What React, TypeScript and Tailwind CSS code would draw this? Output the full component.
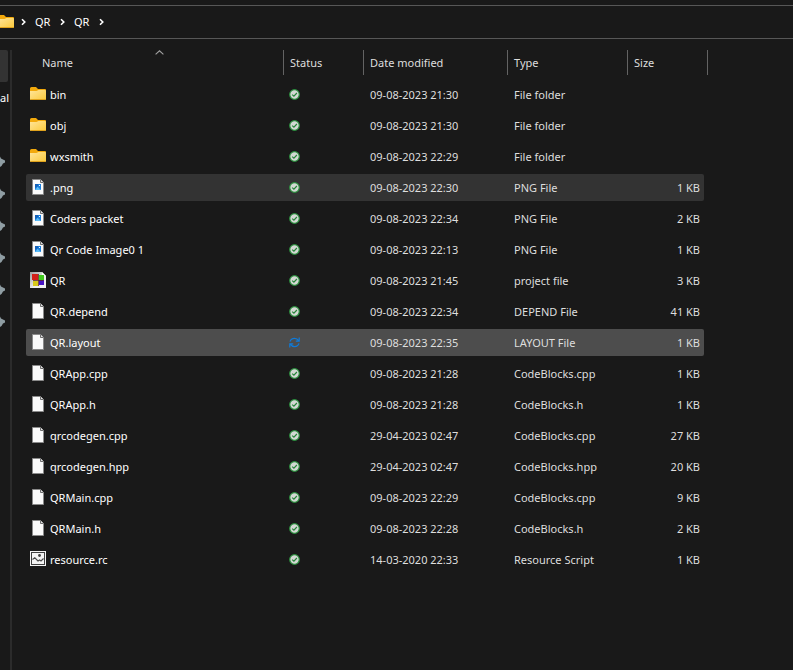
import React from 'react';

type IconKind = 'folder' | 'image' | 'project' | 'file' | 'resource';

interface Entry {
  name: string;
  icon: IconKind;
  date: string;
  type: string;
  size?: string;
  syncing?: boolean;
  state?: 'selected' | 'hover';
}

const entries: Entry[] = [
  { name: 'bin', icon: 'folder', date: '09-08-2023 21:30', type: 'File folder' },
  { name: 'obj', icon: 'folder', date: '09-08-2023 21:30', type: 'File folder' },
  { name: 'wxsmith', icon: 'folder', date: '09-08-2023 22:29', type: 'File folder' },
  { name: '.png', icon: 'image', date: '09-08-2023 22:30', type: 'PNG File', size: '1 KB', state: 'selected' },
  { name: 'Coders packet', icon: 'image', date: '09-08-2023 22:34', type: 'PNG File', size: '2 KB' },
  { name: 'Qr Code Image0 1', icon: 'image', date: '09-08-2023 22:13', type: 'PNG File', size: '1 KB' },
  { name: 'QR', icon: 'project', date: '09-08-2023 21:45', type: 'project file', size: '3 KB' },
  { name: 'QR.depend', icon: 'file', date: '09-08-2023 22:34', type: 'DEPEND File', size: '41 KB' },
  { name: 'QR.layout', icon: 'file', date: '09-08-2023 22:35', type: 'LAYOUT File', size: '1 KB', syncing: true, state: 'hover' },
  { name: 'QRApp.cpp', icon: 'file', date: '09-08-2023 21:28', type: 'CodeBlocks.cpp', size: '1 KB' },
  { name: 'QRApp.h', icon: 'file', date: '09-08-2023 21:28', type: 'CodeBlocks.h', size: '1 KB' },
  { name: 'qrcodegen.cpp', icon: 'file', date: '29-04-2023 02:47', type: 'CodeBlocks.cpp', size: '27 KB' },
  { name: 'qrcodegen.hpp', icon: 'file', date: '29-04-2023 02:47', type: 'CodeBlocks.hpp', size: '20 KB' },
  { name: 'QRMain.cpp', icon: 'file', date: '09-08-2023 22:29', type: 'CodeBlocks.cpp', size: '9 KB' },
  { name: 'QRMain.h', icon: 'file', date: '09-08-2023 22:28', type: 'CodeBlocks.h', size: '2 KB' },
  { name: 'resource.rc', icon: 'resource', date: '14-03-2020 22:33', type: 'Resource Script', size: '1 KB' },
];

function FolderIcon() {
  return (
    <svg className="size-4 shrink-0" viewBox="0 0 16 16" aria-hidden="true">
      <defs>
        <linearGradient id="folderFront" x1="0" y1="0" x2="1" y2="1">
          <stop offset="0" stopColor="#ffe59a" />
          <stop offset="1" stopColor="#fbc93a" />
        </linearGradient>
      </defs>
      <path d="M0 2.5Q0 1 1.5 1H6L8 3H15Q16 3 16 4V12H0Z" fill="#f2a90c" />
      <path d="M0 5H6.5L8.5 4H15Q16 4 16 5V13Q16 14 15 14H1Q0 14 0 13Z" fill="url(#folderFront)" />
      <path d="M0.5 13.5H15.5" stroke="#e0a21c" strokeWidth="1" />
    </svg>
  );
}

function PageIcon({ picture = false }: { picture?: boolean }) {
  return (
    <svg className="size-4 shrink-0" viewBox="0 0 16 16" aria-hidden="true">
      <path d="M2.5 0.5H10.5L13.5 3.5V15.5H2.5Z" fill="#fafafa" stroke="#8a8a8a" />
      <path d="M10.5 0.5V3.5H13.5" fill="#e2e2e2" stroke="#6d6d6d" />
      {picture && (
        <>
          <rect x="5" y="5" width="6" height="6" fill="#1c7fdc" />
          <path d="M5 11L7.6 7.8L11 11Z" fill="#5cbcf5" />
          <path d="M5 5H8V7L5 9Z" fill="#1661b8" />
          <rect x="9" y="6" width="1" height="1" fill="#fff" />
        </>
      )}
    </svg>
  );
}

function ProjectIcon() {
  return (
    <svg className="size-4 shrink-0" viewBox="0 0 16 16" aria-hidden="true">
      <defs>
        <linearGradient id="projectSheet" x1="0" y1="0" x2="1" y2="1">
          <stop offset="0" stopColor="#9c9c9c" />
          <stop offset="0.6" stopColor="#f0f0f0" />
        </linearGradient>
      </defs>
      <path d="M0 0H12L16 4V16H0Z" fill="url(#projectSheet)" />
      <path d="M12 0V4H16Z" fill="#fff" />
      <path d="M2 2H8V8H2Z" fill="#d31f18" />
      <path d="M9 3H14V8H9Z" fill="#42c91f" />
      <path d="M3 9H8V14H3Z" fill="#d8c91b" />
      <path d="M9 8H14V13H9Z" fill="#4512c4" />
      <path d="M8.5 2V14M3 8.5H13.5" stroke="#5a2b20" strokeWidth="0.8" />
    </svg>
  );
}

function ResourceIcon() {
  return (
    <svg className="size-4 shrink-0" viewBox="0 0 16 16" aria-hidden="true">
      <rect width="16" height="15" fill="#f4f4f4" />
      <rect x="1.5" y="1.5" width="13" height="12" fill="#f4f4f4" stroke="#3f3f3f" />
      <circle cx="9.5" cy="4.5" r="1.4" fill="#3f3f3f" />
      <path d="M2.5 8.5L4.8 6.8L8 10L9.6 9L11 10L13.5 7.5" fill="none" stroke="#4a4a4a" strokeWidth="1.1" />
    </svg>
  );
}

function EntryIcon({ kind }: { kind: IconKind }) {
  if (kind === 'folder') return <FolderIcon />;
  if (kind === 'project') return <ProjectIcon />;
  if (kind === 'resource') return <ResourceIcon />;
  return <PageIcon picture={kind === 'image'} />;
}

function SyncedIcon() {
  return (
    <svg className="size-[11px]" viewBox="0 0 11 11" role="img" aria-label="Available on this device">
      <circle cx="5.5" cy="5.5" r="4.8" fill="#d3d8d3" stroke="#2a8f3d" strokeWidth="1.2" />
      <path d="M3.2 5.6L4.9 7.2L7.9 4" fill="none" stroke="#27853a" strokeWidth="1.2" />
    </svg>
  );
}

function SyncingIcon() {
  return (
    <svg className="size-[11px]" viewBox="0 0 11 11" role="img" aria-label="Sync pending">
      <g fill="none" stroke="#0f7ad8" strokeWidth="1.2">
        <path d="M1 4.6Q2 1.4 5.5 1.4Q8.2 1.4 9.8 3.8M10.2 0.6V4.2H6.8" />
        <path d="M10 6.4Q9 9.6 5.5 9.6Q2.8 9.6 1.2 7.2M0.8 10.4V6.8H4.2" />
      </g>
    </svg>
  );
}

function Chevron() {
  return (
    <svg className="h-2 w-[5px]" viewBox="0 0 5 8" aria-hidden="true">
      <path d="M1 1.2L3.8 4L1 6.8" fill="none" stroke="#fff" strokeWidth="1.6" />
    </svg>
  );
}

function Crumb({ label }: { label: string }) {
  return (
    <>
      <button type="button" className="w-4 text-left">
        {label}
      </button>
      <Chevron />
    </>
  );
}

function Heading({ label, span, first = false }: { label: string; span?: number; first?: boolean }) {
  return (
    <th scope="col" colSpan={span} className="h-[27px] p-0 align-top font-normal" aria-sort={first ? 'ascending' : undefined}>
      <button
        type="button"
        className={`relative flex h-[25px] w-full items-center border-r border-[#636363] ${first ? 'pl-4' : 'pl-1.5'}`}
      >
        {label}
        {first && (
          <svg className="absolute top-0 left-[129px] h-[5px] w-[9px]" viewBox="0 0 9 5" aria-hidden="true">
            <path d="M0.6 4.4L4.5 0.8L8.4 4.4" fill="none" stroke="#a0a0a0" strokeWidth="1.1" />
          </svg>
        )}
      </button>
    </th>
  );
}

function Row({ entry }: { entry: Entry }) {
  const fill = entry.state === 'hover' ? 'bg-[#4d4d4d]' : entry.state === 'selected' ? 'bg-[#333333]' : '';
  return (
    <tr>
      <td className={`h-[27px] rounded-l-xs p-0 pl-1 text-white ${fill}`}>
        <div className="flex items-start gap-1">
          <EntryIcon kind={entry.icon} />
          <span className="pt-px">{entry.name}</span>
        </div>
      </td>
      <td className={`p-0 pl-[5px] ${fill}`}>{entry.syncing ? <SyncingIcon /> : <SyncedIcon />}</td>
      <td className={`p-0 pl-1.5 ${fill}`}>{entry.date}</td>
      <td className={`p-0 pl-1.5 ${fill}`}>{entry.type}</td>
      <td className={`rounded-r-xs p-0 pr-1 text-right ${fill}`}>{entry.size}</td>
    </tr>
  );
}

function Sidebar() {
  return (
    <nav aria-label="Quick access" className="flex w-2.5 shrink-0 flex-col">
      <div className="h-8 w-2 rounded-r-xs bg-[#333333]" />
      <div className="flex h-8 items-center text-white">al</div>
      <div className="mt-8 flex flex-col">
        {['p1', 'p2', 'p3', 'p4', 'p5', 'p6'].map((id) => (
          <div key={id} className="flex h-8 items-center">
            <svg className="h-3 w-[5px]" viewBox="0 0 5 12" aria-hidden="true">
              <path d="M0 0.5L1 2.5L5 4.5V6.5L3 7.5L1.5 10L0 11Z" fill="#8f9da3" />
            </svg>
          </div>
        ))}
      </div>
    </nav>
  );
}

export default function App() {
  return (
    <div className="flex min-h-screen flex-col bg-[#191919] pt-[5px] font-['Segoe_UI','Noto_Sans',sans-serif] text-[11px] leading-4 text-[#dedede]">
      <header className="flex h-[34px] items-center gap-[7px] border-y border-[#575757] text-white">
        <div className="flex w-3.5 justify-end overflow-hidden">
          <FolderIcon />
        </div>
        <div className="flex items-center gap-[9px]">
          <Chevron />
          <Crumb label="QR" />
          <Crumb label="QR" />
        </div>
      </header>

      <div className="flex grow pt-[11px]">
        <Sidebar />
        <div className="w-0.5 shrink-0 bg-[#2b2b2b]" />
        <main className="grow pl-3.5">
          <table className="-mt-1 w-[682px] table-fixed border-separate border-spacing-x-0 border-spacing-y-1 text-left">
            <colgroup>
              <col className="w-[258px]" />
              <col className="w-20" />
              <col className="w-36" />
              <col className="w-[120px]" />
              <col className="w-[76px]" />
              <col className="w-1" />
            </colgroup>
            <thead>
              <tr>
                <Heading label="Name" first />
                <Heading label="Status" />
                <Heading label="Date modified" />
                <Heading label="Type" />
                <Heading label="Size" span={2} />
              </tr>
            </thead>
            <tbody>
              {entries.map((entry) => (
                <Row key={entry.name} entry={entry} />
              ))}
            </tbody>
          </table>
        </main>
      </div>
    </div>
  );
}
